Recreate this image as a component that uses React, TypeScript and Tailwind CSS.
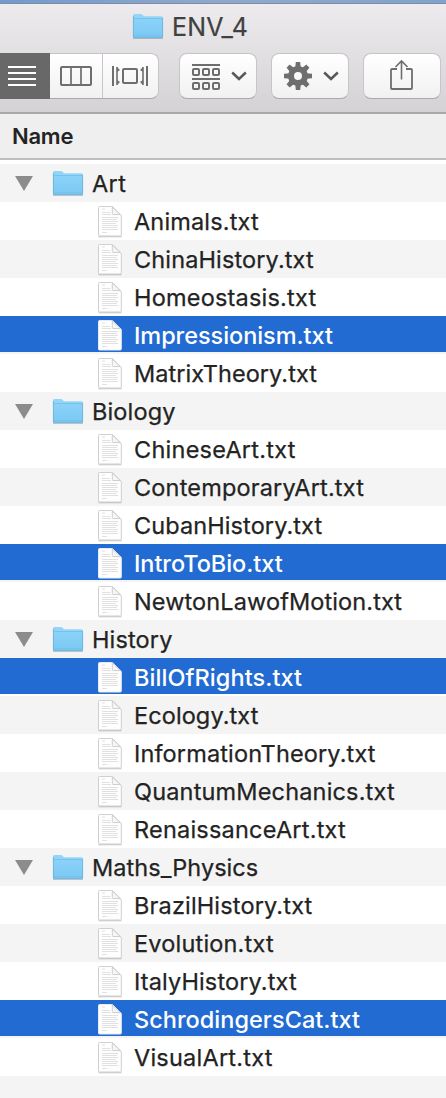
import React from "react";

type Row = { name: string; folder?: boolean; selected?: boolean; track: string };

const rows: Row[] = [
  { name: "Art", folder: true, track: "tracking-[0.4px]" },
  { name: "Animals.txt", track: "tracking-[0.15px]" },
  { name: "ChinaHistory.txt", track: "tracking-[0.13px]" },
  { name: "Homeostasis.txt", track: "tracking-[0.2px]" },
  { name: "Impressionism.txt", selected: true, track: "tracking-[-0.06px]" },
  { name: "MatrixTheory.txt", track: "tracking-[0.06px]" },
  { name: "Biology", folder: true, track: "tracking-[0.15px]" },
  { name: "ChineseArt.txt", track: "tracking-[0.25px]" },
  { name: "ContemporaryArt.txt", track: "tracking-[0.17px]" },
  { name: "CubanHistory.txt", track: "tracking-[0.1px]" },
  { name: "IntroToBio.txt", selected: true, track: "tracking-[-0.06px]" },
  { name: "NewtonLawofMotion.txt", track: "tracking-[0.11px]" },
  { name: "History", folder: true, track: "tracking-[0.15px]" },
  { name: "BillOfRights.txt", selected: true, track: "tracking-[0.07px]" },
  { name: "Ecology.txt", track: "tracking-[0.09px]" },
  { name: "InformationTheory.txt", track: "tracking-[0.14px]" },
  { name: "QuantumMechanics.txt", track: "tracking-[0.17px]" },
  { name: "RenaissanceArt.txt", track: "tracking-[0.22px]" },
  { name: "Maths_Physics", folder: true, track: "tracking-[0.05px]" },
  { name: "BrazilHistory.txt", track: "tracking-[0.16px]" },
  { name: "Evolution.txt", track: "tracking-[0.19px]" },
  { name: "ItalyHistory.txt", track: "tracking-[0.13px]" },
  { name: "SchrodingersCat.txt", selected: true, track: "tracking-[0.02px]" },
  { name: "VisualArt.txt", track: "tracking-[0.23px]" },
];

function Folder() {
  return (
    <svg width="32" height="27" viewBox="0 0 32 27" className="block shrink-0">
      <defs>
        <linearGradient id="folder-front" x1="0" y1="0" x2="0" y2="1">
          <stop offset="0" stopColor="#8bd2f8" />
          <stop offset="1" stopColor="#7ac8f3" />
        </linearGradient>
      </defs>
      <path d="M1 25.3H31" stroke="#000" strokeOpacity=".22" strokeWidth="1.2" />
      <path d="M1 2.5Q1 1 2.5 1H9Q10 1 10.7 2L12 3.3H29.5Q31 3.3 31 4.8V23.5Q31 25 29.5 25H2.5Q1 25 1 23.5Z" fill="#93d5f8" />
      <path d="M1 6H31V23.5Q31 25 29.5 25H2.5Q1 25 1 23.5Z" fill="url(#folder-front)" />
      <path d="M1 5.5H31M1.5 22.8H30.5" stroke="#6dbce8" strokeWidth=".8" />
      <path d="M1.4 3V24M30.6 5V24M1.5 24.6H30.5" stroke="#6bb4dc" strokeWidth=".9" />
    </svg>
  );
}

function Page({ selected }: { selected?: boolean }) {
  return (
    <svg width="26" height="34" viewBox="0 0 26 34" className="block shrink-0">
      {!selected && <path d="M1.5 31.6H24.5" stroke="#000" strokeOpacity=".2" strokeWidth="1.4" />}
      <path
        d="M2.5 1.5H14.5Q15.5 1.5 16.2 2.2L23.8 9.8Q24.3 10.4 24.3 11.2V30Q24.3 31 23.3 31H2.5Q1.5 31 1.5 30V2.5Q1.5 1.5 2.5 1.5Z"
        fill="#fefefe"
        stroke={selected ? "#e6ecf5" : "#cfcfcf"}
        strokeWidth="1"
      />
      <path d="M15.3 2V8.7Q15.3 9.5 16.2 9.5H23.3Z" fill="#f6f6f6" stroke="#cacaca" strokeWidth=".9" />
      <path d="M5 4H8M5 7.5H13M5 9.5H14M5 12.5H21M5 14.5H20M5 16.5H21M5 18.5H19M5 20.5H21M5 22.5H20M5 24.5H21M5 27.5H10" stroke="#dedede" strokeWidth=".9" />
    </svg>
  );
}

function Chevron() {
  return (
    <svg width="16" height="10" viewBox="0 0 16 10" className="block">
      <path d="M1.2 1.5L8 8L14.8 1.5" fill="none" stroke="#585858" strokeWidth="2.5" />
    </svg>
  );
}

const button =
  "box-border flex h-[46px] shrink-0 items-center border border-[#c7c5c7] border-b-[#aaa8aa] bg-linear-to-b from-white to-[#f1f1f1]";

export default function App() {
  return (
    <div className="flex h-[1098px] w-[446px] flex-col overflow-hidden bg-white font-['Inter','Liberation_Sans',sans-serif] text-[#232323]">
      <div className="h-[4px] shrink-0 border-b border-[#858b98] bg-linear-to-r from-[#6f9bd0] via-[#8fa9cd] to-[#7da3d0]" />
      <header className="flex h-[110px] shrink-0 flex-col border-b-2 border-[#a9a8aa] bg-linear-to-b from-[#edebed] to-[#d4d2d4]">
        <div className="flex h-[49px] items-start pt-[9px] pl-[132px]">
          <Folder />
          <span className="ml-[8px] text-[25px] leading-[28px] tracking-[0.15px] text-[#404040] [-webkit-text-stroke:0.2px]">ENV_4</span>
        </div>
        <div className="flex">
          <div className="flex h-[46px] w-[50px] shrink-0 items-center bg-[#686868] pl-[8px]">
            <svg width="28" height="22" viewBox="0 0 28 22">
              <path d="M0 2H28M0 8H28M0 14H28M0 20H28" stroke="#fff" strokeWidth="2" />
            </svg>
          </div>
          <div className={button + " w-[53px] border-l-0 pl-[10px]"}>
            <svg width="32" height="20" viewBox="0 0 32 20">
              <rect x="1" y="1" width="30" height="18" rx="1" fill="none" stroke="#6e6e6e" strokeWidth="2" />
              <path d="M11 1V19M21 1V19" stroke="#6e6e6e" strokeWidth="1.7" />
            </svg>
          </div>
          <div className={button + " w-[56px] rounded-r-[8px] border-l-0 pl-[9px]"}>
            <svg width="36" height="20" viewBox="0 0 36 20" fill="none" stroke="#6e6e6e">
              <path d="M1 0V20M35 0V20" strokeWidth="2" />
              <path d="M5 1V19M31 1V19" strokeWidth="1.6" />
              <path d="M5 1L8 4L5 6ZM5 14L8 16L5 19ZM31 1L28 4L31 6ZM31 14L28 16L31 19Z" fill="#6e6e6e" stroke="none" />
              <rect x="11" y="3" width="14" height="14" rx="1" strokeWidth="2" />
            </svg>
          </div>
          <div className={button + " ml-[20px] w-[78px] gap-[10px] rounded-[8px] pl-[11px]"}>
            <svg width="30" height="27" viewBox="0 0 30 27" fill="none" stroke="#6e6e6e" className="relative top-px">
              <path d="M1 1H29M1 15H29" strokeWidth="2" />
              <g strokeWidth="2">
                <rect x="2" y="5" width="6" height="6" rx="1" />
                <rect x="12" y="5" width="6" height="6" rx="1" />
                <rect x="22" y="5" width="6" height="6" rx="1" />
                <rect x="2" y="19" width="6" height="6" rx="1" />
                <rect x="12" y="19" width="6" height="6" rx="1" />
                <rect x="22" y="19" width="6" height="6" rx="1" />
              </g>
            </svg>
            <Chevron />
          </div>
          <div className={button + " ml-[14px] w-[78px] gap-[10px] rounded-[8px] pl-[11px]"}>
            <svg width="30" height="30" viewBox="-15 -15 30 30">
              <circle r="7" fill="none" stroke="#6e6e6e" strokeWidth="6" />
              <g fill="#6e6e6e">
                <path id="tooth" d="M-2.8 -8L-2.2 -14H2.2L2.8 -8Z" />
                <use href="#tooth" transform="rotate(45)" />
                <use href="#tooth" transform="rotate(90)" />
                <use href="#tooth" transform="rotate(135)" />
                <use href="#tooth" transform="rotate(180)" />
                <use href="#tooth" transform="rotate(225)" />
                <use href="#tooth" transform="rotate(270)" />
                <use href="#tooth" transform="rotate(315)" />
              </g>
            </svg>
            <Chevron />
          </div>
          <div className={button + " ml-[14px] w-[78px] rounded-[8px] pl-[25px]"}>
            <svg width="24" height="32" viewBox="0 0 24 32" className="relative -top-px" fill="none" stroke="#6e6e6e">
              <path d="M8 10H3Q2 10 2 11V29Q2 30 3 30H22Q23 30 23 29V11Q23 10 22 10H17" strokeWidth="1.8" />
              <path d="M12.5 20.5V2M6.5 8L12.5 2L18.5 8" strokeWidth="1.6" />
            </svg>
          </div>
        </div>
      </header>
      <div className="box-border h-[46px] shrink-0 border-b-2 border-[#bebebe] bg-[#efefef] pl-[12px] text-[22px] leading-[44px] font-semibold tracking-[-0.25px]">
        Name
      </div>
      <main className="mt-[4px] flex flex-col">
        {rows.map((row, i) => (
          <div key={row.name} className={"h-[38px] shrink-0 " + (i % 2 === 0 ? "bg-[#f4f4f4]" : "bg-white")}>
            <div className={"flex items-start " + (row.selected ? "h-[36px] bg-[#226bd2] text-white" : "h-[38px]")}>
              {row.folder ? (
                <>
                  <svg width="18" height="15" viewBox="0 0 18 15" className="mt-[12px] ml-[15px] shrink-0">
                    <path d="M0 0H18L9 15Z" fill="#8c8c8c" />
                  </svg>
                  <div className="mt-[6px] ml-[19px]">
                    <Folder />
                  </div>
                </>
              ) : (
                <div className="mt-[3px] ml-[97px]">
                  <Page selected={row.selected} />
                </div>
              )}
              <span
                className={
                  "text-[23.5px] leading-[40px] whitespace-nowrap " +
                  (row.folder ? "ml-[8px] " : "ml-[11px] ") +
                  (row.selected ? "font-medium " : "[-webkit-text-stroke:0.25px] ") +
                  row.track
                }
              >
                {row.name}
              </span>
            </div>
          </div>
        ))}
      </main>
      <div className="grow bg-[#f4f4f4]" />
    </div>
  );
}
